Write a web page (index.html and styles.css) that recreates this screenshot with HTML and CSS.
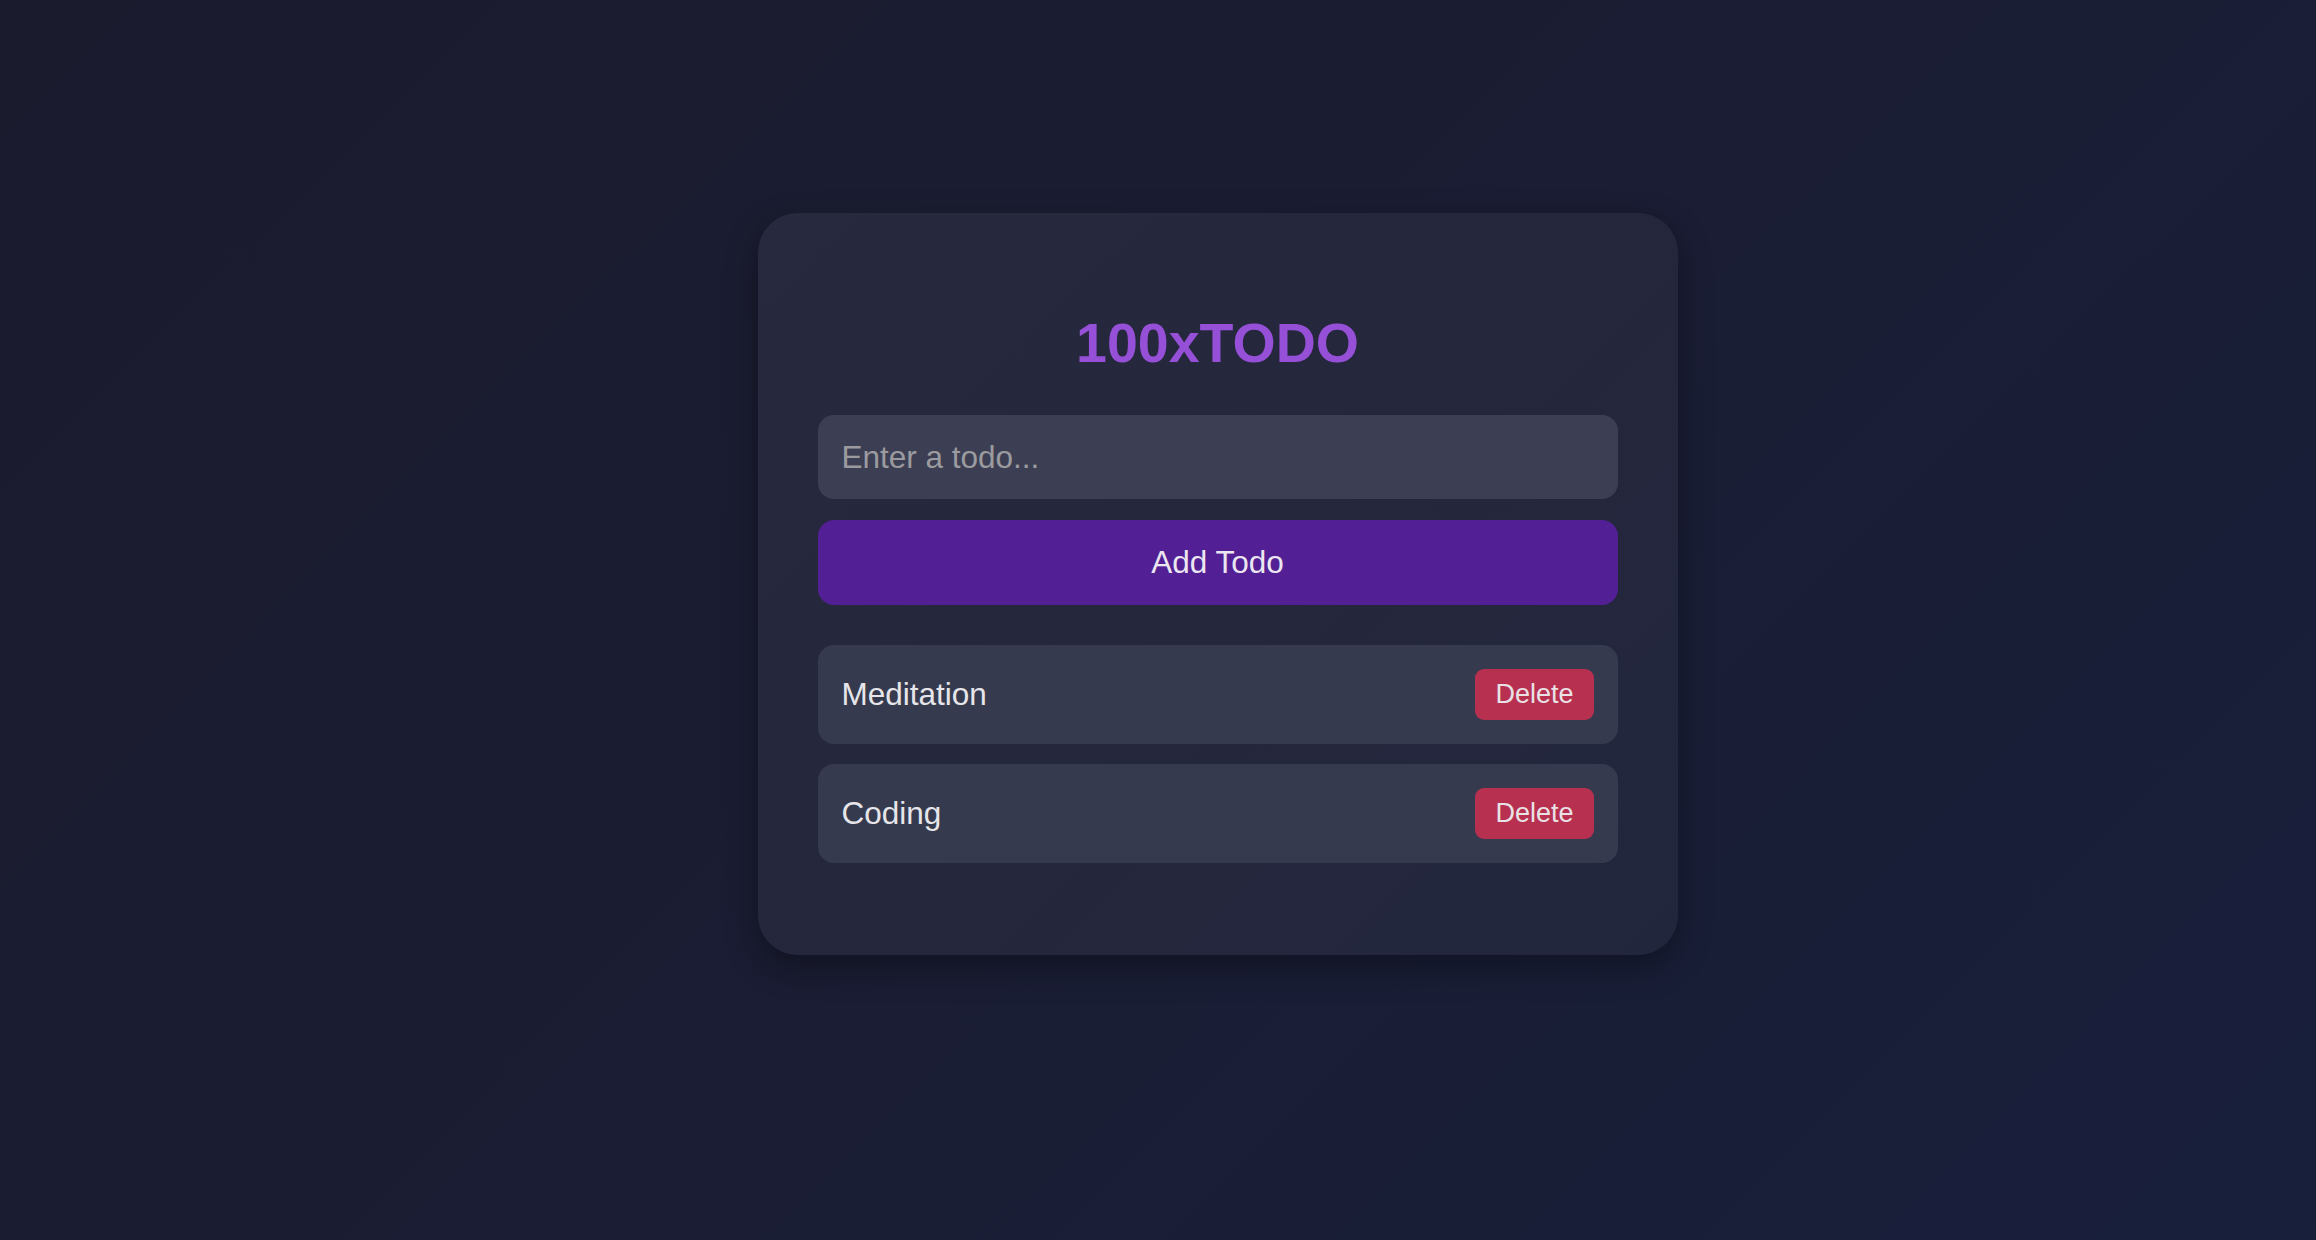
FILE: index.html
```html
<!DOCTYPE html>
<html lang="en">
<head>
<meta charset="utf-8">
<title>100xTODO</title>
<link rel="stylesheet" href="styles.css">
</head>
<body>
<main class="page">
  <section class="card">
    <h1 class="title">100xTODO</h1>
    <input class="todo-input" type="text" placeholder="Enter a todo...">
    <button class="add-btn">Add Todo</button>
    <ul class="todo-list">
      <li class="todo-item"><span class="todo-text">Meditation</span><button class="delete-btn">Delete</button></li>
      <li class="todo-item"><span class="todo-text">Coding</span><button class="delete-btn">Delete</button></li>
    </ul>
  </section>
</main>
</body>
</html>
```

FILE: styles.css
```css
* { box-sizing: border-box; }
html, body { margin: 0; padding: 0; height: 100%; }
body {
  font-family: "Liberation Sans", Arial, sans-serif;
  background: linear-gradient(135deg, #1b1b2e 0%, #1a1d33 50%, #181f3b 100%);
  color: #e4e4e8;
}
.page {
  min-height: 1240px;
  display: flex;
  justify-content: center;
  align-items: flex-start;
  padding: 213px 0 0 119px;
}
.card {
  width: 920px;
  padding: 60px 60px 92px;
  border-radius: 40px;
  background: linear-gradient(135deg, #272a3e 0%, #24273c 60%, #22263d 100%);
  box-shadow: 0 12px 32px rgba(0, 0, 0, 0.35);
  display: flex;
  flex-direction: column;
}
.title {
  margin: 39px 0 41px;
  font-size: 55.5px;
  line-height: 62px;
  font-weight: 700;
  text-align: center;
  color: #9650d8;
}
.todo-input {
  height: 84px;
  width: 100%;
  border: none;
  outline: none;
  border-radius: 16px;
  background: linear-gradient(90deg, #3c3f53, #3c3f54);
  padding: 0 24px;
  font-family: inherit;
  font-size: 31.5px;
  color: #e4e4e8;
}
.todo-input::placeholder { color: #9b9b9f; }
.add-btn {
  margin-top: 21px;
  height: 85px;
  width: 100%;
  border: none;
  border-radius: 16px;
  background: #521f94;
  color: #ebe6f0;
  font-family: inherit;
  font-size: 31.5px;
}
.todo-list {
  list-style: none;
  margin: 40px 0 0;
  padding: 0;
  display: flex;
  flex-direction: column;
  gap: 20px;
}
.todo-item {
  height: 99px;
  display: flex;
  align-items: center;
  justify-content: space-between;
  padding: 0 24px;
  border-radius: 16px;
  background: #363a4e;
}
.todo-text {
  font-size: 31.5px;
  color: #e6e6ea;
}
.delete-btn {
  height: 51px;
  padding: 0 20px;
  border: none;
  border-radius: 9px;
  background: #b8304f;
  color: #e8e2e6;
  font-family: inherit;
  font-size: 27px;
}
```
